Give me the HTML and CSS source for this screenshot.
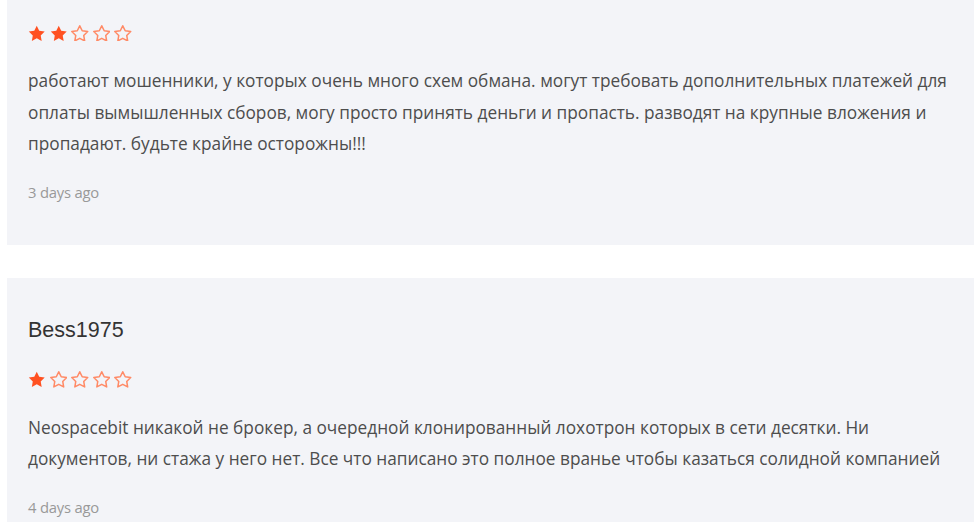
FILE: index.html
```html
<!DOCTYPE html>
<html lang="ru">
<head>
<meta charset="utf-8">
<link rel="stylesheet" href="styles.css">
</head>
<body>
<div class="list">
  <div class="card card-first">
    <div class="stars">
      <svg class="star full" viewBox="1 1 22 21"><path d="M12 2l3.09 6.26L22 9.27l-5 4.87 1.18 6.88L12 17.77l-6.18 3.25L7 14.14 2 9.27l6.91-1.01L12 2z"/></svg>
      <svg class="star full" viewBox="1 1 22 21"><path d="M12 2l3.09 6.26L22 9.27l-5 4.87 1.18 6.88L12 17.77l-6.18 3.25L7 14.14 2 9.27l6.91-1.01L12 2z"/></svg>
      <svg class="star empty" viewBox="1 1 22 21"><path d="M12 2l3.09 6.26L22 9.27l-5 4.87 1.18 6.88L12 17.77l-6.18 3.25L7 14.14 2 9.27l6.91-1.01L12 2z"/></svg>
      <svg class="star empty" viewBox="1 1 22 21"><path d="M12 2l3.09 6.26L22 9.27l-5 4.87 1.18 6.88L12 17.77l-6.18 3.25L7 14.14 2 9.27l6.91-1.01L12 2z"/></svg>
      <svg class="star empty" viewBox="1 1 22 21"><path d="M12 2l3.09 6.26L22 9.27l-5 4.87 1.18 6.88L12 17.77l-6.18 3.25L7 14.14 2 9.27l6.91-1.01L12 2z"/></svg>
    </div>
    <p class="text">работают мошенники, у которых очень много схем обмана. могут требовать дополнительных платежей для оплаты вымышленных сборов, могу просто принять деньги и пропасть. разводят на крупные вложения и пропадают. будьте крайне осторожны!!!</p>
    <div class="date">3 days ago</div>
  </div>
  <div class="card">
    <div class="name">Bess1975</div>
    <div class="stars">
      <svg class="star full" viewBox="1 1 22 21"><path d="M12 2l3.09 6.26L22 9.27l-5 4.87 1.18 6.88L12 17.77l-6.18 3.25L7 14.14 2 9.27l6.91-1.01L12 2z"/></svg>
      <svg class="star empty" viewBox="1 1 22 21"><path d="M12 2l3.09 6.26L22 9.27l-5 4.87 1.18 6.88L12 17.77l-6.18 3.25L7 14.14 2 9.27l6.91-1.01L12 2z"/></svg>
      <svg class="star empty" viewBox="1 1 22 21"><path d="M12 2l3.09 6.26L22 9.27l-5 4.87 1.18 6.88L12 17.77l-6.18 3.25L7 14.14 2 9.27l6.91-1.01L12 2z"/></svg>
      <svg class="star empty" viewBox="1 1 22 21"><path d="M12 2l3.09 6.26L22 9.27l-5 4.87 1.18 6.88L12 17.77l-6.18 3.25L7 14.14 2 9.27l6.91-1.01L12 2z"/></svg>
      <svg class="star empty" viewBox="1 1 22 21"><path d="M12 2l3.09 6.26L22 9.27l-5 4.87 1.18 6.88L12 17.77l-6.18 3.25L7 14.14 2 9.27l6.91-1.01L12 2z"/></svg>
    </div>
    <p class="text">Neospacebit никакой не брокер, а очередной клонированный лохотрон которых в сети десятки. Ни документов, ни стажа у него нет. Все что написано это полное вранье чтобы казаться солидной компанией</p>
    <div class="date">4 days ago</div>
  </div>
</div>
</body>
</html>
```

FILE: styles.css
```css
html, body {
  margin: 0;
  padding: 0;
  background: #ffffff;
  overflow: hidden;
}

.list {
  display: flex;
  flex-direction: column;
  gap: 33px;
  padding-left: 7px;
}

.card {
  background: #f3f4f8;
  padding: 39px 20px 43px 21px;
  display: flex;
  flex-direction: column;
}

.card-first {
  padding-top: 25px;
}

.name {
  font-family: "Liberation Sans", Arial, sans-serif;
  font-size: 21.5px;
  line-height: 26px;
  color: #333333;
  margin-bottom: 29px;
}

.stars {
  display: flex;
  gap: 4px;
  height: 16px;
  align-items: center;
}

.star {
  width: 17.5px;
  height: 16.7px;
}

.star.full path {
  fill: #ff5122;
}

.star.empty path {
  fill: none;
  stroke: #ff8a66;
  stroke-width: 1.9;
  stroke-linejoin: round;
}

.text {
  margin: 24px 0 0 0;
  font-family: "Open Sans", sans-serif;
  font-size: 17.25px;
  line-height: 31.5px;
  color: #4d4d4d;
}

.date {
  margin-top: 22px;
  font-family: "Open Sans", sans-serif;
  font-size: 14.8px;
  line-height: 20px;
  color: #999999;
  letter-spacing: -0.2px;
}
```
